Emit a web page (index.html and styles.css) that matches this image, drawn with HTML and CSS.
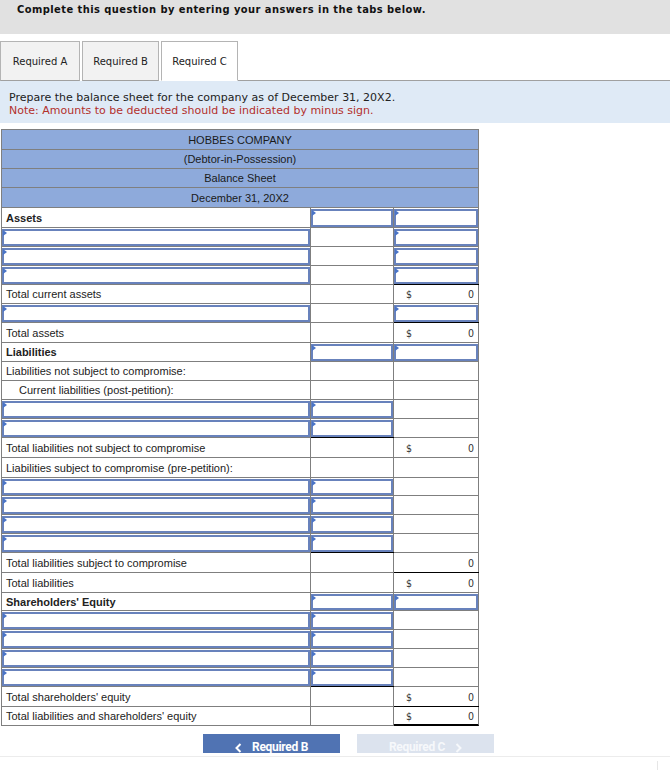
FILE: index.html
```html
<!DOCTYPE html>
<html lang="en">
<head>
<meta charset="utf-8">
<title>Balance Sheet</title>
<link rel="stylesheet" href="styles.css">
</head>
<body>
<div class="topbar">Complete this question by entering your answers in the tabs below.</div>

<div class="tabs">
  <div class="tab tab-a">Required A</div>
  <div class="tab">Required B</div>
  <div class="tab active">Required C</div>
  <div class="tab-rest"></div>
</div>

<div class="instr">
  <div>Prepare the balance sheet for the company as of December 31, 20X2.</div>
  <div class="note">Note: Amounts to be deducted should be indicated by minus sign.</div>
</div>

<div class="sheet">
  <div class="hd">HOBBES COMPANY</div>
  <div class="hd">(Debtor-in-Possession)</div>
  <div class="hd">Balance Sheet</div>
  <div class="hd">December 31, 20X2</div>

  <div class="c lbl b">Assets</div><div class="c in"><div class="box"></div></div><div class="c in"><div class="box"></div></div>
  <div class="c in"><div class="box"></div></div><div class="c"></div><div class="c in"><div class="box"></div></div>
  <div class="c in"><div class="box"></div></div><div class="c"></div><div class="c in"><div class="box"></div></div>
  <div class="c in"><div class="box"></div></div><div class="c"></div><div class="c in"><div class="box"></div></div>
  <div class="c lbl">Total current assets</div><div class="c"></div><div class="c amt sum"><span>$</span><span>0</span></div>
  <div class="c in"><div class="box"></div></div><div class="c"></div><div class="c in"><div class="box"></div></div>
  <div class="c lbl">Total assets</div><div class="c"></div><div class="c amt sum"><span>$</span><span>0</span></div>
  <div class="c lbl b">Liabilities</div><div class="c in"><div class="box"></div></div><div class="c in"><div class="box"></div></div>
  <div class="c lbl">Liabilities not subject to compromise:</div><div class="c"></div><div class="c"></div>
  <div class="c lbl ind">Current liabilities (post-petition):</div><div class="c"></div><div class="c"></div>
  <div class="c in"><div class="box"></div></div><div class="c in"><div class="box"></div></div><div class="c"></div>
  <div class="c in"><div class="box"></div></div><div class="c in"><div class="box"></div></div><div class="c"></div>
  <div class="c lbl">Total liabilities not subject to compromise</div><div class="c sum"></div><div class="c amt"><span>$</span><span>0</span></div>
  <div class="c lbl">Liabilities subject to compromise (pre-petition):</div><div class="c"></div><div class="c"></div>
  <div class="c in"><div class="box"></div></div><div class="c in"><div class="box"></div></div><div class="c"></div>
  <div class="c in"><div class="box"></div></div><div class="c in"><div class="box"></div></div><div class="c"></div>
  <div class="c in"><div class="box"></div></div><div class="c in"><div class="box"></div></div><div class="c"></div>
  <div class="c in"><div class="box"></div></div><div class="c in"><div class="box"></div></div><div class="c"></div>
  <div class="c lbl">Total liabilities subject to compromise</div><div class="c sum"></div><div class="c amt end"><span>0</span></div>
  <div class="c lbl">Total liabilities</div><div class="c"></div><div class="c amt sum"><span>$</span><span>0</span></div>
  <div class="c lbl b">Shareholders' Equity</div><div class="c in"><div class="box"></div></div><div class="c in"><div class="box"></div></div>
  <div class="c in"><div class="box"></div></div><div class="c in"><div class="box"></div></div><div class="c"></div>
  <div class="c in"><div class="box"></div></div><div class="c in"><div class="box"></div></div><div class="c"></div>
  <div class="c in"><div class="box"></div></div><div class="c in"><div class="box"></div></div><div class="c"></div>
  <div class="c in"><div class="box"></div></div><div class="c in"><div class="box"></div></div><div class="c"></div>
  <div class="c lbl">Total shareholders' equity</div><div class="c sum"></div><div class="c amt"><span>$</span><span>0</span></div>
  <div class="c lbl">Total liabilities and shareholders' equity</div><div class="c"></div><div class="c amt sum dbl"><span>$</span><span>0</span></div>
</div>

<div class="nav">
  <div class="btn prev">
    <svg class="chev" width="7" height="10" viewBox="0 0 7 10"><polyline points="5.5,1 1.5,5 5.5,9" fill="none" stroke="#fff" stroke-width="2"/></svg>
    <span>Required B</span>
  </div>
  <div class="btn next">
    <span>Required C</span>
    <svg class="chev" width="7" height="10" viewBox="0 0 7 10"><polyline points="1.5,1 5.5,5 1.5,9" fill="none" stroke="#fff" stroke-width="2"/></svg>
  </div>
</div>
<div class="foot"><div class="tick"></div></div>
</body>
</html>
```

FILE: styles.css
```css
html, body {
  margin: 0;
  padding: 0;
  background: #fff;
}
body {
  width: 670px;
  font-family: "Liberation Sans", Arial, sans-serif;
  color: #222;
}

.topbar {
  height: 34px;
  box-sizing: border-box;
  background: #e1e1e1;
  padding: 3px 0 0 17px;
  font-family: "DejaVu Sans Condensed", "DejaVu Sans", sans-serif;
  font-stretch: condensed;
  font-weight: bold;
  font-size: 11px;
  line-height: 14px;
  letter-spacing: 0.45px;
  color: #111;
}

.tabs {
  display: flex;
  margin-top: 7px;
  height: 40px;
}
.tab {
  width: 77px;
  height: 40px;
  box-sizing: border-box;
  margin-right: 2px;
  border: 1px solid #b4b4b4;
  border-bottom-color: #a0a0a0;
  background: #f2f2f2;
  display: flex;
  align-items: center;
  justify-content: center;
  font-family: "DejaVu Sans", sans-serif;
  font-size: 10px;
  color: #222;
  padding-top: 1px;
}
.tab-a { width: 80px; }
.tab.active {
  background: #fff;
  border-bottom-color: #fff;
  margin-right: 0;
}
.tab-rest {
  flex: 1;
  border-bottom: 1px solid #a0a0a0;
}

.instr {
  height: 42px;
  box-sizing: border-box;
  background: #dfeaf6;
  padding: 10px 0 0 9px;
  font-family: "DejaVu Sans", sans-serif;
  font-size: 11px;
  line-height: 13px;
  color: #222;
}
.note { color: #b3302c; }

.sheet {
  display: grid;
  grid-template-columns: 309px 83px 85px;
  grid-template-rows:
    20px 19px 19px 20px
    20px 19px 19px 19px 19px 19px 20px
    19px 19px 19px 19px 19px 20px 20px
    18px 19px 19px 19px 20px 20px
    18px 19px 19px 19px 19px 20px 19px;
  width: max-content;
  margin: 6px 0 0 1px;
  border-top: 1px solid #7f7f7f;
  border-left: 1px solid #7f7f7f;
  font-size: 11px;
}
.hd {
  grid-column: 1 / 4;
  background: #8eaadb;
  border-right: 1px solid #7f7f7f;
  border-bottom: 1px solid #7f7f7f;
  display: flex;
  align-items: center;
  justify-content: center;
  color: #1a1a1a;
}
.c {
  border-right: 1px solid #7f7f7f;
  border-bottom: 1px solid #7f7f7f;
  background: #fff;
  min-width: 0;
}
.lbl {
  display: flex;
  align-items: center;
  padding-left: 4px;
  white-space: nowrap;
  color: #222;
}
.lbl.b { font-weight: bold; }
.lbl.ind { padding-left: 17px; }

.in { display: flex; flex-direction: column; }
.box {
  position: relative;
  flex: 1;
  margin-top: 1px;
  border: 2px solid #6882bc;
  background: #fff;
}
.box::before {
  content: "";
  position: absolute;
  top: -1px;
  left: -1px;
  border-left: 4px solid #4a74c6;
  border-top: 3px solid transparent;
  border-bottom: 3px solid transparent;
}

.amt {
  display: flex;
  align-items: center;
  justify-content: space-between;
  padding: 0 4px 0 12px;
  font-family: "DejaVu Sans Condensed", "DejaVu Sans", sans-serif;
  font-stretch: condensed;
  font-size: 10.5px;
  color: #333;
}
.amt.end { justify-content: flex-end; }
.sum { box-shadow: 0 -1px 0 #000; }
.dbl { border-bottom: 2px solid #000; }

.nav {
  display: flex;
  gap: 17px;
  padding-left: 203px;
  margin-top: 8px;
}
.btn {
  width: 137px;
  height: 19px;
  box-sizing: border-box;
  overflow: hidden;
  display: flex;
  justify-content: center;
  align-items: flex-start;
  gap: 10px;
  padding-top: 6px;
  font-family: Roboto, "Liberation Sans", sans-serif;
  font-weight: bold;
  font-size: 12px;
  line-height: 15px;
  letter-spacing: -0.3px;
  color: #fff;
}
.btn .chev { margin-top: 3px; }
.prev { background: #5073b3; }
.next { background: #dce3ee; color: #f6f8fb; }
.next .chev polyline { stroke: #f6f8fb; }

.foot {
  margin-top: 3px;
  height: 14px;
  border-top: 1px solid #ececec;
  display: flex;
  justify-content: flex-end;
  padding-right: 12px;
}
.tick {
  width: 1px;
  height: 9px;
  margin-top: 4px;
  background: #e6e6e6;
}
```
